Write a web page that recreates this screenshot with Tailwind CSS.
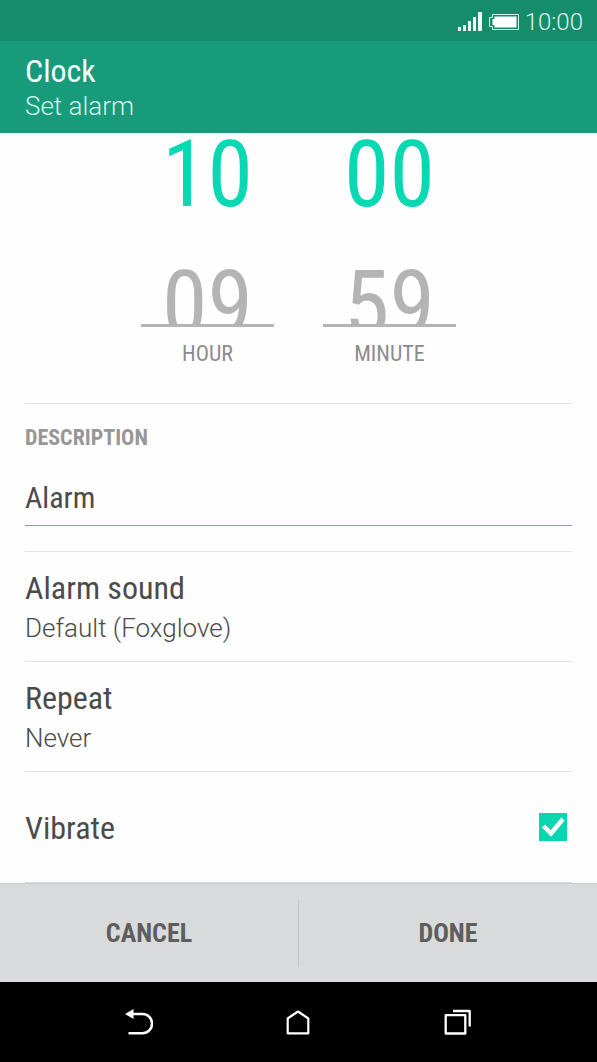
<!DOCTYPE html>
<html lang="en">
<head>
<meta charset="utf-8">
<meta name="viewport" content="width=device-width, initial-scale=1">
<title>Set alarm</title>
<script src="https://cdn.jsdelivr.net/npm/@tailwindcss/browser@4"></script>
</head>
<body class="flex min-h-screen flex-col bg-[#fefefe] font-['Roboto_Condensed',Roboto,sans-serif] text-[#4b4b4b]">

<div class="flex h-[41px] shrink-0 items-center justify-end bg-[#168d6a] pt-[2px] pr-[14px]">
  <svg class="mr-[7px] h-5 w-6" viewBox="0 0 24 20" fill="#f2fdf9" aria-hidden="true">
    <path d="M0 15h3v4H0zM5 13h3v6H5zM10 9h3v10h-3zM15 5h3v14h-3zM20 0h4v19h-4z"/>
  </svg>
  <svg class="mr-[6px] h-4 w-[30px]" viewBox="0 0 30 16" aria-hidden="true">
    <path d="M3.500.5h26v15h-26v-3h-3v-9h3z" fill="none" stroke="#d3f3e8"/>
    <path d="M5.500 2.500h22v11h-22v-2.500h-2v-6h2z" fill="#fff"/>
  </svg>
  <time class="font-[Roboto,sans-serif] text-2xl leading-6 font-light text-[#dcf5ed]">10:00</time>
</div>

<header class="shrink-0 bg-[#189b7a] px-[25px] pt-[10px] pb-3">
  <h1 class="text-[32px] leading-10 text-[#f2fffb]">Clock</h1>
  <p class="font-[Roboto,sans-serif] text-[26px] leading-[30px] font-light text-[#d5f6ec]">Set alarm</p>
</header>

<main class="grow px-[25px]">
  <section class="flex justify-center gap-[49px] pb-[33px]" aria-label="Time">
    <div class="w-[133px] text-center">
      <div class="flex h-[194px] flex-col gap-[46px] overflow-hidden border-b-[3px] border-[#b4b4b4] text-[92px] leading-[84px] text-[#b4b4b4]">
        <span class="text-[#09d8b3]">10</span>
        <span>09</span>
      </div>
      <p class="pt-[11px] text-[22px] leading-8 text-[#8c8c8c]">HOUR</p>
    </div>
    <div class="w-[133px] text-center">
      <div class="flex h-[194px] flex-col gap-[46px] overflow-hidden border-b-[3px] border-[#b4b4b4] text-[92px] leading-[84px] text-[#b4b4b4]">
        <span class="text-[#09d8b3]">00</span>
        <span>59</span>
      </div>
      <p class="pt-[11px] text-[22px] leading-8 text-[#8c8c8c]">MINUTE</p>
    </div>
  </section>

  <section class="border-t border-[#e4e4e4] pt-[18px] pb-[25px]">
    <label for="description" class="block text-[22px] leading-8 font-bold text-[#979797]">DESCRIPTION</label>
    <div class="mt-4 border-b border-[#2fc6ba]">
      <input id="description" type="text" value="Alarm" class="block h-[55px] w-full bg-transparent text-[30px] text-[#4b4b4b] outline-none">
    </div>
  </section>

  <button type="button" class="block w-full border-t border-[#e4e4e4] pt-4 pb-[15px] text-left">
    <span class="block text-[32px] leading-10">Alarm sound</span>
    <span class="mt-[2px] block font-[Roboto,sans-serif] text-[26px] leading-9 font-light">Default (Foxglove)</span>
  </button>

  <button type="button" class="block w-full border-t border-[#e4e4e4] pt-4 pb-[15px] text-left">
    <span class="block text-[32px] leading-10">Repeat</span>
    <span class="mt-[2px] block font-[Roboto,sans-serif] text-[26px] leading-9 font-light">Never</span>
  </button>

  <div class="flex items-start justify-between border-y border-t-[#e4e4e4] border-b-[#d8d8d8] pt-9 pr-[5px] pb-[34px]">
    <label for="vibrate" class="text-[32px] leading-10">Vibrate</label>
    <span class="mt-[5px] grid">
      <input id="vibrate" type="checkbox" checked class="peer col-start-1 row-start-1 size-7 appearance-none bg-[#b4b4b4] checked:bg-[#09d5b1]">
      <svg class="pointer-events-none invisible col-start-1 row-start-1 size-7 peer-checked:visible" viewBox="0 0 28 28" fill="none" stroke="#fff" stroke-width="4.500" aria-hidden="true">
        <path d="M4.500 13l7.500 7.500L24 6"/>
      </svg>
    </span>
  </div>
</main>

<footer class="flex h-[99px] shrink-0 items-center border-t border-[#cdced0] bg-[#d9dadc] text-[26px] font-bold text-[#5e5e5e]">
  <button type="button" class="h-full flex-1">CANCEL</button>
  <span class="h-[67px] w-px bg-[#c3c4c6]"></span>
  <button type="button" class="h-full flex-1">DONE</button>
</footer>

<nav class="flex h-20 shrink-0 bg-black px-[10%]" aria-label="System">
  <button type="button" aria-label="Back" class="grid flex-1 place-items-center">
    <svg class="size-7" viewBox="0 0 28 28" fill="none" stroke="#fff" stroke-width="2.500" stroke-linecap="round">
      <path d="M8 6h9.500a9.600 9.600 0 0 1 0 19.200H4.500"/>
      <path d="M0 6l8.500-5v10z" fill="#fff" stroke="none"/>
    </svg>
  </button>
  <button type="button" aria-label="Home" class="grid flex-1 place-items-center">
    <svg class="size-7" viewBox="0 0 28 28" fill="none" stroke="#fff" stroke-width="2.200" stroke-linejoin="round">
      <path d="M3.700 10.500L14 3.500l10.300 7v14.800H3.700z"/>
    </svg>
  </button>
  <button type="button" aria-label="Recent apps" class="grid flex-1 place-items-center">
    <svg class="size-7" viewBox="0 0 28 28" fill="none" stroke="#fff" stroke-width="2.300" stroke-linejoin="round">
      <path d="M1.700 7.200h19.600v18.300H1.700z"/>
      <path d="M9 3h16.700v15.500"/>
    </svg>
  </button>
</nav>

</body>
</html>
